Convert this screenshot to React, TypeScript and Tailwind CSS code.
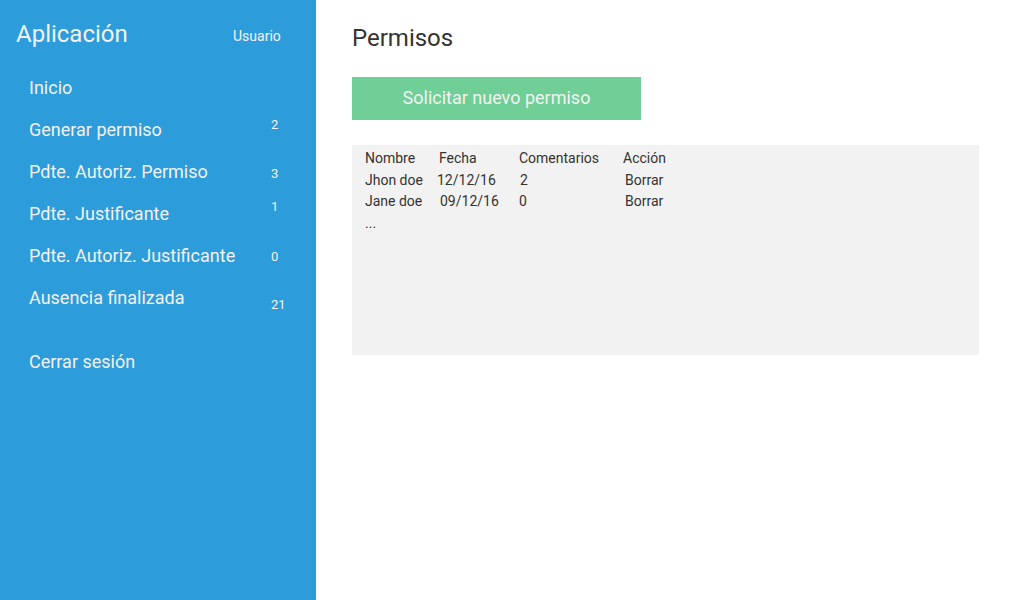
const menu = [
  { label: "Inicio", count: "", offset: "mt-0" },
  { label: "Generar permiso", count: "2", offset: "mt-[-5px]" },
  { label: "Pdte. Autoriz. Permiso", count: "3", offset: "mt-[2px]" },
  { label: "Pdte. Justificante", count: "1", offset: "mt-[-7px]" },
  { label: "Pdte. Autoriz. Justificante", count: "0", offset: "mt-[1px]" },
  { label: "Ausencia finalizada", count: "21", offset: "mt-[7px]" },
];

const rows = [
  { name: "Jhon doe", date: "12/12/16", dateFix: "ml-[-2px]", comments: "2", commentFix: "ml-[1px]", action: "Borrar" },
  { name: "Jane doe", date: "09/12/16", dateFix: "ml-[1px]", comments: "0", commentFix: "ml-0", action: "Borrar" },
];

export default function App() {
  return (
    <div className="flex h-[600px] w-[1024px] overflow-hidden bg-white font-['Roboto',sans-serif]">
      <aside className="flex w-[316px] shrink-0 flex-col bg-[#2d9cdb] text-[#f2f2f2]">
        <header className="flex h-[67px] items-start pl-4 pt-[18px]">
          <h1 className="w-[217px] text-[24px] leading-[32px]">Aplicación</h1>
          <span className="mt-[6px] text-[14px] leading-[24px]">Usuario</span>
        </header>
        <nav className="flex flex-col pl-[29px]">
          {menu.map((item) => (
            <div key={item.label} className="flex h-[42px] items-start">
              <span className="w-[242px] text-[18px] leading-[42px]">{item.label}</span>
              <span className={`text-[13px] leading-[42px] ${item.offset}`}>{item.count}</span>
            </div>
          ))}
          <div className="mt-[22px] h-[42px] text-[18px] leading-[42px]">Cerrar sesión</div>
        </nav>
      </aside>
      <main className="flex flex-1 flex-col items-start pl-[36px] pt-[22px] text-[#333333]">
        <h2 className="text-[24px] leading-[32px]">Permisos</h2>
        <button className="mt-[23px] h-[43px] w-[289px] bg-[#6fcf97] pb-[2px] text-[18px] text-[#f2f2f2]">
          Solicitar nuevo permiso
        </button>
        <section className="mt-[25px] h-[210px] w-[627px] bg-[#f2f2f2] pl-[13px] pt-[3px] text-[14px] leading-[21.5px]">
          <div className="flex">
            <span className="w-[74px]">Nombre</span>
            <span className="w-[80px]">Fecha</span>
            <span className="w-[104px]">Comentarios</span>
            <span>Acción</span>
          </div>
          {rows.map((r) => (
            <div key={r.name} className="flex">
              <span className="w-[74px]">{r.name}</span>
              <span className="w-[80px]">
                <span className={r.dateFix}>{r.date}</span>
              </span>
              <span className="w-[104px]">
                <span className={r.commentFix}>{r.comments}</span>
              </span>
              <span className="ml-[2px]">{r.action}</span>
            </div>
          ))}
          <div>...</div>
        </section>
      </main>
    </div>
  );
}
